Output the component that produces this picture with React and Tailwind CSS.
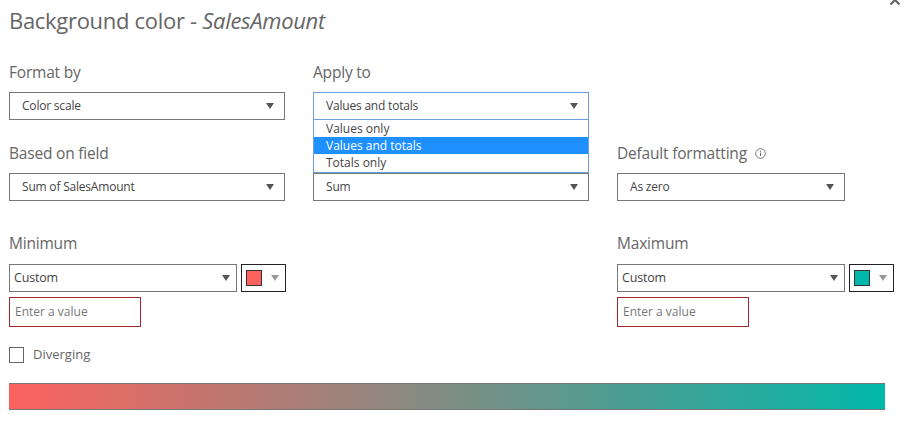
import React from "react";

const FONT = { fontFamily: '"Open Sans", "Noto Sans", sans-serif' };

const Caret = ({ color = "#555" }) => (
    <svg width="8" height="6" viewBox="0 0 8 6" className="shrink-0">
        <path d="M0 0 H8 L4 6 Z" fill={color} />
    </svg>
);

const Select = ({ value, width, focused, compact }) => (
    <div
        className={`flex items-center justify-between h-[28px] bg-white border ${compact ? "pl-[4px] pr-[6px]" : "pl-[12px] pr-[10px]"} ${focused ? "border-[#6d9fe0]" : "border-[#777]"} ${width}`}
    >
        <span className={`${compact ? "text-[12.5px]" : "text-[12px]"} text-[#444] tracking-[-0.2px]`}>{value}</span>
        <Caret />
    </div>
);

const Label = ({ children, className = "" }) => (
    <div className={`text-[15.5px] text-[#666] leading-[20px] tracking-[-0.2px] ${className}`}>{children}</div>
);

const ColorButton = ({ color }) => (
    <div className="flex items-center h-[28px] w-[45px] border border-[#222] pl-[4px] gap-[9px] bg-white">
        <div className="w-[16px] h-[16px] border border-[#333]" style={{ background: color }} />
        <Caret color="#999" />
    </div>
);

const ValueInput = () => (
    <div className="flex items-center h-[30px] w-[132px] border border-[#a4262c] px-[5px] mt-[5px]">
        <span className="text-[12px] text-[#777]">Enter a value</span>
    </div>
);

const App = () => {
    return (
        <div className="relative w-[908px] h-[439px] bg-white overflow-hidden" style={FONT}>
            <button className="absolute right-[7px] top-[-6px] text-[#666]">
                <svg width="12" height="12" viewBox="0 0 12 12">
                    <path d="M1.5 1.5 L10.5 10.5 M10.5 1.5 L1.5 10.5" stroke="#666" strokeWidth="2.2" />
                </svg>
            </button>

            <div className="pl-[9px] pt-[5px]">
                <div className="text-[22px] leading-[30px] text-[#666] tracking-[-0.3px]">
                    Background color - <span className="italic">SalesAmount</span>
                </div>

                {/* row 1 */}
                <div className="flex gap-[28px] mt-[27px]">
                    <div className="w-[276px]">
                        <Label>Format by</Label>
                        <div className="mt-[10px]">
                            <Select value="Color scale" width="w-[276px]" />
                        </div>
                    </div>
                    <div className="relative w-[276px]">
                        <Label>Apply to</Label>
                        <div className="mt-[10px]">
                            <Select value="Values and totals" width="w-[276px]" focused />
                        </div>
                        <div className="absolute left-0 top-[58px] z-10 w-[276px] bg-white border-x border-b border-[#6d9fe0] pb-[1px]">
                            <div className="h-[17px] leading-[17px] px-[12px] text-[12px] text-[#444]">Values only</div>
                            <div className="h-[17px] leading-[17px] px-[12px] text-[12px] text-white bg-[#1e90ff]">Values and totals</div>
                            <div className="h-[17px] leading-[17px] px-[12px] text-[12px] text-[#444]">Totals only</div>
                        </div>
                    </div>
                </div>

                {/* row 2 */}
                <div className="flex gap-[28px] mt-[23px]">
                    <div className="w-[276px]">
                        <Label>Based on field</Label>
                        <div className="mt-[10px]">
                            <Select value="Sum of SalesAmount" width="w-[276px]" />
                        </div>
                    </div>
                    <div className="w-[276px]">
                        <Label>&nbsp;</Label>
                        <div className="mt-[10px]">
                            <Select value="Sum" width="w-[276px]" />
                        </div>
                    </div>
                    <div className="w-[228px]">
                        <Label className="flex items-center gap-[8px]">
                            Default formatting
                            <svg width="11" height="11" viewBox="0 0 11 11">
                                <circle cx="5.5" cy="5.5" r="4.8" fill="none" stroke="#666" strokeWidth="0.9" />
                                <path d="M5.5 4.6 V8" stroke="#666" strokeWidth="1" />
                                <circle cx="5.5" cy="3.2" r="0.6" fill="#666" />
                            </svg>
                        </Label>
                        <div className="mt-[10px]">
                            <Select value="As zero" width="w-[228px]" />
                        </div>
                    </div>
                </div>

                {/* row 3 */}
                <div className="flex mt-[32px]">
                    <div className="w-[608px]">
                        <Label>Minimum</Label>
                        <div className="flex gap-[4px] mt-[11px]">
                            <Select value="Custom" width="w-[228px]" compact />
                            <ColorButton color="#fd625e" />
                        </div>
                        <ValueInput />
                    </div>
                    <div>
                        <Label>Maximum</Label>
                        <div className="flex gap-[4px] mt-[11px]">
                            <Select value="Custom" width="w-[228px]" compact />
                            <ColorButton color="#01b8aa" />
                        </div>
                        <ValueInput />
                    </div>
                </div>

                {/* diverging */}
                <div className="flex items-center gap-[9px] mt-[18px]">
                    <div className="w-[15px] h-[16px] border border-[#666]" />
                    <span className="text-[13px] text-[#666]">Diverging</span>
                </div>

                <div className="mt-[18px] w-[876px] h-[27px] border-y border-[#777] bg-[linear-gradient(to_right,#fd625e,#01b8aa)]" />
            </div>
        </div>
    );
};

export default App;
